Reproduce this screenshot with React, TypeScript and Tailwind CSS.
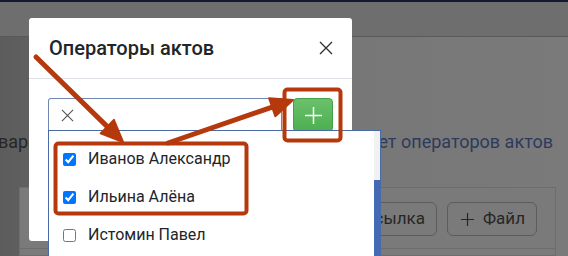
import React from 'react';

const font = { fontFamily: 'Roboto, "Noto Sans", sans-serif' };

function arrowHead(tx: number, ty: number, fx: number, fy: number, len = 22, w = 19) {
  const dx = tx - fx;
  const dy = ty - fy;
  const d = Math.hypot(dx, dy);
  const ux = dx / d;
  const uy = dy / d;
  const bx = tx - ux * len;
  const by = ty - uy * len;
  const nx = -uy;
  const ny = ux;
  return {
    base: [bx, by],
    points: `${tx},${ty} ${bx + (nx * w) / 2},${by + (ny * w) / 2} ${bx - (nx * w) / 2},${by - (ny * w) / 2}`,
  };
}

function Annotations() {
  const a1 = arrowHead(123, 142, 36, 57);
  const a2 = arrowHead(293, 100, 168, 143);
  return (
    <svg className="pointer-events-none absolute left-0 top-0" width="568" height="256" viewBox="0 0 568 256">
      <rect x="55.5" y="143.5" width="191" height="70" rx="3" fill="none" stroke="#b5390c" strokeWidth="4" />
      <rect x="284.5" y="89.5" width="56" height="51" rx="3" fill="none" stroke="#b5390c" strokeWidth="4" />
      <line x1="36" y1="57" x2={a1.base[0]} y2={a1.base[1]} stroke="#b5390c" strokeWidth="5" strokeLinecap="round" />
      <polygon points={a1.points} fill="#b5390c" stroke="#b5390c" strokeWidth="2" strokeLinejoin="round" />
      <line x1="168" y1="143" x2={a2.base[0]} y2={a2.base[1]} stroke="#b5390c" strokeWidth="5" strokeLinecap="round" />
      <polygon points={a2.points} fill="#b5390c" stroke="#b5390c" strokeWidth="2" strokeLinejoin="round" />
    </svg>
  );
}

function Cross({ size, color, width }: { size: number; color: string; width: number }) {
  return (
    <svg width={size} height={size} viewBox="0 0 14 14">
      <path d="M1 1L13 13M13 1L1 13" stroke={color} strokeWidth={width} />
    </svg>
  );
}

const people = [
  { name: 'Иванов Александр', checked: true },
  { name: 'Ильина Алёна', checked: true },
  { name: 'Истомин Павел', checked: false },
];

export default function App() {
  return (
    <div className="relative h-[256px] w-[568px] overflow-hidden" style={font}>
      {/* dimmed page */}
      <div className="flex h-full flex-col bg-[linear-gradient(90deg,#5c5c5c_0%,#757575_35%,#7a7a7a_100%)]">
        <div className="h-[2px] bg-[#111a2e]" />
        <div className="h-[35px] border-b border-[#595959] bg-[#6e6e6e]" />
        <div className="mt-[94px] flex items-center justify-between pr-[15px] text-[18px] leading-[22px]">
          <span className="-ml-[2px] text-[#262626]">варс</span>
          <span className="text-[#2e3a5c]">Учет операторов актов</span>
        </div>
        <div className="ml-[19px] mr-[12px] mt-[34px] flex-1 border border-[#6d6d6d] bg-[#7a7a7a]">
          <div className="flex h-[61px] items-start justify-end gap-[10px] border-b border-[#6d6d6d] pr-[18px] pt-[14px]">
            <button className="h-[34px] rounded-md border border-[#5c5c5c] px-[11px] text-[17px] text-[#262626]">
              Ссылка
            </button>
            <button className="flex h-[34px] items-center gap-[9px] rounded-md border border-[#5c5c5c] pl-[13px] pr-[11px] text-[17px] text-[#262626]">
              <svg width="13" height="13" viewBox="0 0 14 14">
                <path d="M7 0V14M0 7H14" stroke="#262626" strokeWidth="1.3" />
              </svg>
              Файл
            </button>
          </div>
        </div>
      </div>

      {/* modal */}
      <div className="absolute left-[29px] top-[18px] h-[223px] w-[323px] rounded-[3px] bg-white">
        <div className="flex h-[61px] items-center justify-between border-b border-[#dee2e6] pl-[20px] pr-[19px]">
          <h2 className="text-[20px] font-medium text-[#212529]">Операторы актов</h2>
          <Cross size={14} color="#333" width={1.4} />
        </div>
        <div className="flex items-start gap-[11px] px-[19px] pt-[19px]">
          <div className="flex h-[33px] w-[234px] items-center rounded-tl-[3px] border-l border-t border-r border-[#6f86b0] pl-[12px]">
            <Cross size={13} color="#555" width={1.2} />
          </div>
          <button className="flex h-[34px] w-[40px] items-center justify-center rounded-[4px] border border-[#43a047] bg-[linear-gradient(#6cc06c,#4caf50)]">
            <svg width="17" height="17" viewBox="0 0 17 17">
              <path d="M8.5 0V17M0 8.5H17" stroke="#fff" strokeWidth="1.5" />
            </svg>
          </button>
        </div>
      </div>

      {/* dropdown */}
      <div className="absolute left-[48px] top-[130px] flex h-[140px] w-[333px] border border-[#4a6aa5] bg-white">
        <div className="flex-1 pt-[9px]">
          {people.map((p) => (
            <label key={p.name} className="flex h-[38px] items-center gap-[12px] pl-[14px] text-[16px] text-[#212529]">
              <input type="checkbox" defaultChecked={p.checked} className="m-0 h-[13px] w-[13px]" />
              {p.name}
            </label>
          ))}
        </div>
        <div className="flex w-[6px] flex-col bg-[#f1f1f1]">
          <div className="h-[49px]" />
          <div className="flex-1 bg-[#4469b5]" />
        </div>
      </div>

      <Annotations />
    </div>
  );
}
